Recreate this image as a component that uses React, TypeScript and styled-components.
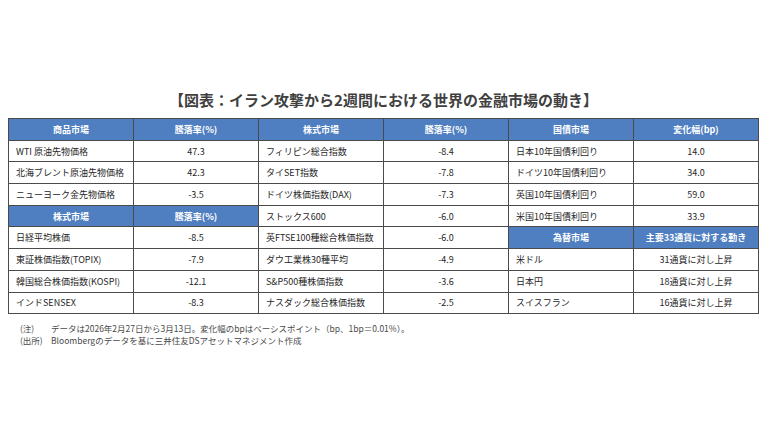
import React from "react";
import styled, { createGlobalStyle } from "styled-components";

const Global = createGlobalStyle`
  html, body { margin: 0; padding: 0; background: #ffffff; }
  body { font-family: "Noto Sans CJK JP", "Noto Sans", sans-serif; color: #222; }
`;

const Page = styled.div`
  width: 770px;
  height: 433px;
  box-sizing: border-box;
  padding: 89px 0 0 8px;
  display: flex;
  flex-direction: column;
`;

const Title = styled.h1`
  margin: 0 0 7px 0;
  width: 751px;
  text-align: center;
  font-size: 15px;
  line-height: 22px;
  font-weight: 700;
  color: #404040;
`;

const Grid = styled.div`
  width: 751px;
  box-sizing: border-box;
  display: grid;
  grid-template-columns: repeat(6, 1fr);
  grid-auto-rows: 20.7px;
  gap: 1px;
  padding: 1px;
  background: #4b4b4b;
`;

const Cell = styled.div<{ $head?: boolean; $label?: boolean }>`
  display: flex;
  align-items: center;
  justify-content: ${(p) => (p.$label && !p.$head ? "flex-start" : "center")};
  padding-left: ${(p) => (p.$label && !p.$head ? "7px" : "0")};
  background: ${(p) => (p.$head ? "#4f7fc0" : "#ffffff")};
  color: ${(p) => (p.$head ? "#ffffff" : "#262626")};
  font-size: 9px;
  font-weight: ${(p) => (p.$head ? 700 : 400)};
  white-space: nowrap;
  overflow: hidden;
`;

const Notes = styled.div`
  margin: 8px 0 0 12px;
  display: flex;
  flex-direction: column;
  font-size: 8.5px;
  line-height: 12px;
  color: #4a4a4a;
`;

const NoteLine = styled.div`
  display: flex;
`;

const NoteLabel = styled.span`
  width: 31px;
  flex: none;
`;

type C = { t: string; h?: boolean };

const H = (t: string): C => ({ t, h: true });
const D = (t: string): C => ({ t });

const rows: C[][] = [
  [H("商品市場"), H("騰落率(%)"), H("株式市場"), H("騰落率(%)"), H("国債市場"), H("変化幅(bp)")],
  [D("WTI 原油先物価格"), D("47.3"), D("フィリピン総合指数"), D("-8.4"), D("日本10年国債利回り"), D("14.0")],
  [D("北海ブレント原油先物価格"), D("42.3"), D("タイSET指数"), D("-7.8"), D("ドイツ10年国債利回り"), D("34.0")],
  [D("ニューヨーク金先物価格"), D("-3.5"), D("ドイツ株価指数(DAX)"), D("-7.3"), D("英国10年国債利回り"), D("59.0")],
  [H("株式市場"), H("騰落率(%)"), D("ストックス600"), D("-6.0"), D("米国10年国債利回り"), D("33.9")],
  [D("日経平均株価"), D("-8.5"), D("英FTSE100種総合株価指数"), D("-6.0"), H("為替市場"), H("主要33通貨に対する動き")],
  [D("東証株価指数(TOPIX)"), D("-7.9"), D("ダウ工業株30種平均"), D("-4.9"), D("米ドル"), D("31通貨に対し上昇")],
  [D("韓国総合株価指数(KOSPI)"), D("-12.1"), D("S&P500種株価指数"), D("-3.6"), D("日本円"), D("18通貨に対し上昇")],
  [D("インドSENSEX"), D("-8.3"), D("ナスダック総合株価指数"), D("-2.5"), D("スイスフラン"), D("16通貨に対し上昇")],
];

export default function App() {
  return (
    <>
      <Global />
      <Page>
        <Title>【図表：イラン攻撃から2週間における世界の金融市場の動き】</Title>
        <Grid>
          {rows.map((r, ri) =>
            r.map((c, ci) => (
              <Cell key={`${ri}-${ci}`} $head={c.h} $label={ci % 2 === 0}>
                {c.t}
              </Cell>
            ))
          )}
        </Grid>
        <Notes>
          <NoteLine>
            <NoteLabel>(注)</NoteLabel>
            <span>データは2026年2月27日から3月13日。変化幅のbpはベーシスポイント（bp、1bp＝0.01%）。</span>
          </NoteLine>
          <NoteLine>
            <NoteLabel>(出所)</NoteLabel>
            <span>Bloombergのデータを基に三井住友DSアセットマネジメント作成</span>
          </NoteLine>
        </Notes>
      </Page>
    </>
  );
}
